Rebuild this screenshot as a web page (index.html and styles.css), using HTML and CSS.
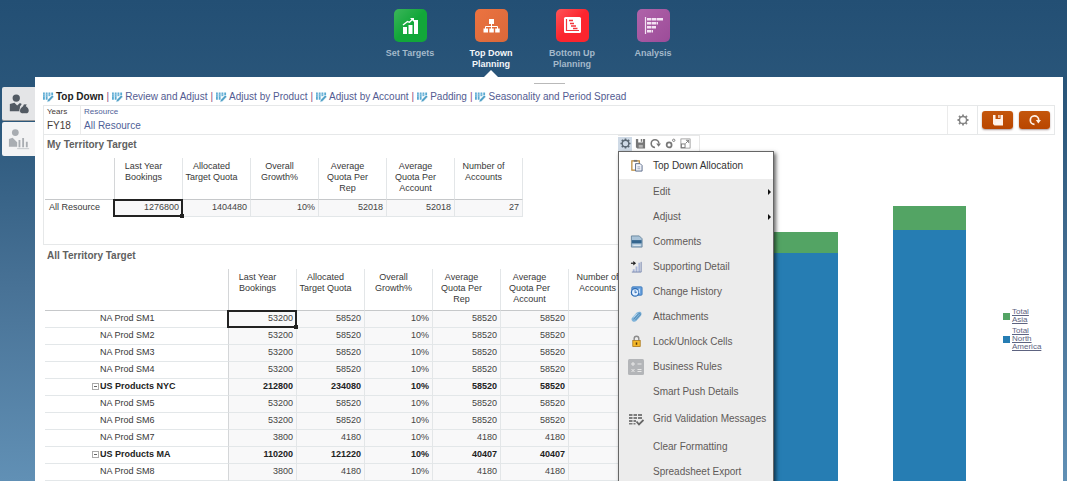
FILE: index.html
```html
<!DOCTYPE html>
<html lang="en">
<head>
<meta charset="utf-8">
<title>Top Down Planning</title>
<link rel="stylesheet" href="styles.css">
</head>
<body>
<svg class="defs" aria-hidden="true">
  <symbol id="form" viewBox="0 0 12 12">
    <path d="M0 1h2v8h-2zM3 1h2v8h-2zM6 1h2v4h-2zM9 1h2v3h-2z" fill="#58a9d2"/>
    <path d="M0 3h9M0 5h8" stroke="#b5daec" stroke-width=".6"/>
    <path d="M4.500 11.500l.8-2.600 4.700-4.900 1.700 1.700-4.700 5z" fill="#4a9cc4" stroke="#d9edf6" stroke-width=".5"/>
  </symbol>
  <symbol id="gear" viewBox="0 0 12 12">
    <circle cx="6" cy="6" r="3.600" fill="none" stroke="currentColor" stroke-width="1.500"/>
    <path d="M6 .5v2M6 9.500v2M.5 6h2M9.500 6h2M2 2l1.400 1.400M8.600 8.600l1.400 1.400M2 10l1.400-1.400M8.600 3.400l1.400-1.400" stroke="currentColor" stroke-width="1.800"/>
  </symbol>
  <symbol id="disk" viewBox="0 0 12 12">
    <path d="M1 1h2.500v4h5v-4h2.500v10.500h-8.500l-1.500-1.500z" fill="currentColor"/>
    <path d="M6.300 1h1.300v3h-1.300z" fill="currentColor"/>
    <path d="M4 7.500h4.500v3h-4.500z" fill="#fff" fill-opacity=".45"/>
  </symbol>
  <symbol id="redo" viewBox="0 0 12 12">
    <path d="M5.500 10.300a4.200 4.200 0 1 1 4.200-4.300" fill="none" stroke="currentColor" stroke-width="1.700"/>
    <path d="M6.800 6h5.200l-2.600 3.600z" fill="currentColor"/>
  </symbol>
</svg>

<div class="app">
  <nav class="topnav" aria-label="Planning steps">
    <a class="step" href="#">
      <svg class="tile green" viewBox="0 0 33 33"><path d="M9 18h4v7h-4zM14.500 16h4v9h-4zM20 11h4v14h-4z" fill="#fff"/><path d="M9 16l4.500-3.500 2 .8 3-3" fill="none" stroke="#fff" stroke-width="1.400"/><path d="M16 9h4v4z" fill="#fff"/></svg>
      <span>Set Targets</span>
    </a>
    <a class="step current" href="#">
      <svg class="tile orange" viewBox="0 0 33 33"><path d="M14 10h5v5h-5zM8.500 19.500h4.500v4h-4.500zM14.300 19.500h4.500v4h-4.500zM20.200 19.500h4.500v4h-4.500z" fill="#fff"/><path d="M16.500 15v5M10.500 20v-2.500h12v2.500" fill="none" stroke="#fff"/></svg>
      <span>Top Down Planning</span>
    </a>
    <a class="step" href="#">
      <svg class="tile red" viewBox="0 0 33 33"><rect x="8" y="8" width="17" height="16" rx="1.500" fill="#fff"/><path d="M10.500 10v11.500h12.500" fill="none" stroke="#f2363c" stroke-width="1.200"/><path d="M13 11.500h4M14 14.500h4M15 17h5M17 19.500h4.500" stroke="#f2363c" stroke-width="1.700"/></svg>
      <span>Bottom Up Planning</span>
    </a>
    <a class="step" href="#">
      <svg class="tile purple" viewBox="0 0 33 33"><path d="M8.500 8v17" stroke="#f3e3f3" stroke-width="1.200"/><path d="M10 10.200h16M10 14.200h11M10 18.200h9M10 22.300h6" stroke="#f3e3f3" stroke-width="2.400"/><path d="M14.500 8v17M19.500 8v17" stroke="#a2529d" stroke-width=".5"/></svg>
      <span>Analysis</span>
    </a>
  </nav>

  <div class="workspace">
    <div class="side">
      <button class="sidetab active" aria-label="Targets"><svg viewBox="0 0 24 24"><circle cx="9" cy="5.500" r="4" fill="#525a63"/><path d="M2 12l5-1.500 3 3 3-2.500 2 1-2 3v5h-11z" fill="#525a63"/><path d="M17 12h4l-1 2.500c4 2 4 8 0 8h-4c-5 0-4-6 0-8z" fill="#525a63" stroke="#eee" stroke-width=".8"/></svg></button>
      <button class="sidetab" aria-label="Analysis"><svg viewBox="0 0 24 24"><circle cx="8" cy="5" r="3.700" fill="#a9adb2"/><path d="M1 12l4-1.500 5 5v5h-9z" fill="#a9adb2"/><path d="M12.500 13v8M16.500 11v10M20.500 15v6" stroke="#a9adb2" stroke-width="2"/><path d="M10 22.500h13" stroke="#c3c6c9"/></svg></button>
    </div>

    <main class="sheet">
      <div class="handle"></div>
      <nav class="tabs" aria-label="Forms">
        <a class="tab selected" href="#"><svg><use href="#form"/></svg>Top Down</a><i>|</i>
        <a class="tab" href="#"><svg><use href="#form"/></svg>Review and Adjust</a><i>|</i>
        <a class="tab" href="#"><svg><use href="#form"/></svg>Adjust by Product</a><i>|</i>
        <a class="tab" href="#"><svg><use href="#form"/></svg>Adjust by Account</a><i>|</i>
        <a class="tab" href="#"><svg><use href="#form"/></svg>Padding</a><i>|</i>
        <a class="tab" href="#"><svg><use href="#form"/></svg>Seasonality and Period Spread</a>
      </nav>

      <div class="pov">
        <div class="dim"><small>Years</small><span>FY18</span></div>
        <a class="dim member" href="#"><small>Resource</small><span>All Resource</span></a>
        <button class="settings" aria-label="Settings"><svg><use href="#gear"/></svg></button>
        <div class="actions">
          <button aria-label="Save"><svg><use href="#disk"/></svg></button>
          <button aria-label="Refresh"><svg><use href="#redo"/></svg></button>
        </div>
      </div>

      <div class="board">
        <div class="grids">
          <section class="panel first">
            <h2>My Territory Target</h2>
            <table class="grid">
              <colgroup><col class="c-short"><col><col><col><col><col><col></colgroup>
              <thead><tr><td></td><th>Last Year Bookings</th><th>Allocated Target Quota</th><th>Overall Growth%</th><th>Average Quota Per Rep</th><th>Average Quota Per Account</th><th>Number of Accounts</th></tr></thead>
              <tbody><tr><th>All Resource</th><td class="picked">1276800</td><td>1404480</td><td>10%</td><td>52018</td><td>52018</td><td>27</td></tr></tbody>
            </table>
          </section>
          <section class="panel">
            <h2>All Territory Target</h2>
            <table class="grid tree">
              <colgroup><col class="c-long"><col><col><col><col><col><col></colgroup>
              <thead><tr><td></td><th>Last Year Bookings</th><th>Allocated Target Quota</th><th>Overall Growth%</th><th>Average Quota Per Rep</th><th>Average Quota Per Account</th><th>Number of Accounts</th></tr></thead>
              <tbody>
                <tr><th>NA Prod SM1</th><td class="picked">53200</td><td>58520</td><td>10%</td><td>58520</td><td>58520</td><td></td></tr>
                <tr><th>NA Prod SM2</th><td>53200</td><td>58520</td><td>10%</td><td>58520</td><td>58520</td><td></td></tr>
                <tr><th>NA Prod SM3</th><td>53200</td><td>58520</td><td>10%</td><td>58520</td><td>58520</td><td></td></tr>
                <tr><th>NA Prod SM4</th><td>53200</td><td>58520</td><td>10%</td><td>58520</td><td>58520</td><td></td></tr>
                <tr class="total"><th><button class="toggle" aria-label="Collapse"></button>US Products NYC</th><td>212800</td><td>234080</td><td>10%</td><td>58520</td><td>58520</td><td></td></tr>
                <tr><th>NA Prod SM5</th><td>53200</td><td>58520</td><td>10%</td><td>58520</td><td>58520</td><td></td></tr>
                <tr><th>NA Prod SM6</th><td>53200</td><td>58520</td><td>10%</td><td>58520</td><td>58520</td><td></td></tr>
                <tr><th>NA Prod SM7</th><td>3800</td><td>4180</td><td>10%</td><td>4180</td><td>4180</td><td></td></tr>
                <tr class="total"><th><button class="toggle" aria-label="Collapse"></button>US Products MA</th><td>110200</td><td>121220</td><td>10%</td><td>40407</td><td>40407</td><td></td></tr>
                <tr><th>NA Prod SM8</th><td>3800</td><td>4180</td><td>10%</td><td>4180</td><td>4180</td><td></td></tr>
              </tbody>
            </table>
          </section>
        </div>

        <section class="chart">
          <div class="tools">
            <button class="on" aria-label="Actions"><svg><use href="#gear"/></svg></button>
            <button aria-label="Save"><svg><use href="#disk"/></svg></button>
            <button aria-label="Refresh"><svg><use href="#redo"/></svg></button>
            <button aria-label="Options"><svg viewBox="0 0 12 12"><circle cx="4.500" cy="7.500" r="2.700" fill="none" stroke="currentColor" stroke-width="1.900"/><circle cx="9.500" cy="2.500" r="1.300" fill="none" stroke="currentColor"/></svg></button>
            <button aria-label="Maximize"><svg viewBox="0 0 12 12"><rect x="1" y="1" width="10" height="10" fill="none" stroke="currentColor" stroke-width=".7"/><rect x="1.500" y="6.500" width="4" height="4" fill="none" stroke="currentColor"/><path d="M6 6l3.500-3.500M6.500 2.500h3v3" fill="none" stroke="currentColor"/></svg></button>
          </div>
          <div class="plotrow">
            <div class="plot">
              <div class="bar" style="height:75.5%"><b style="height:8.4%"></b></div>
              <div class="bar" style="height:83.3%"><b style="height:8.7%"></b></div>
            </div>
            <div class="legend">
              <a href="#"><b class="asia"></b><span>Total Asia</span></a>
              <a href="#"><b></b><span>Total North America</span></a>
            </div>
          </div>
          <div class="menu" role="menu">
            <button class="hot" role="menuitem"><svg viewBox="0 0 14 14"><rect x="2" y="2" width="8" height="10" fill="#fff" stroke="#b88635" stroke-width="1.300"/><path d="M4 1h4v2h-4z" fill="#777"/><path d="M6 5h5l2 2v6h-7z" fill="#f4f6fb" stroke="#536584"/><path d="M8 8.500h3M8 10.500h3" stroke="#7c8ba6" stroke-width=".8"/></svg><span>Top Down Allocation</span></button>
            <button class="sub" role="menuitem"><span>Edit</span></button>
            <button class="sub" role="menuitem"><span>Adjust</span></button>
            <button role="menuitem"><svg viewBox="0 0 14 14"><path d="M1.500 1h8.500l3 3v9h-11.500z" fill="#a9c3d8" stroke="#69879f"/><path d="M2 5.500h10.500v3.500h-10.500z" fill="#34658e"/><path d="M3.500 11h8" stroke="#f3f7fa"/></svg><span>Comments</span></button>
            <button role="menuitem"><svg viewBox="0 0 14 14"><path d="M1 3.500h3" stroke="#222" stroke-width="1.300"/><path d="M3.500 1.200l3 2.300-3 2.300z" fill="#222"/><path d="M3 10h2v3h-2zM6 7h2v6h-2zM9 3h2v10h-2z" fill="#a9b6d8"/><path d="M12 2v11h-10" fill="none" stroke="#7786ad"/></svg><span>Supporting Detail</span></button>
            <button role="menuitem"><svg viewBox="0 0 14 14"><rect x="2" y="2" width="11" height="9" rx="1" fill="#6ca3df" stroke="#3d7abc"/><circle cx="5.500" cy="8" r="4" fill="#e3f0ff" stroke="#2c6bb4" stroke-width="1.300"/><path d="M5.500 5.500v3l2-1" fill="none" stroke="#2c6bb4"/><path d="M10 4v5" stroke="#e3f0ff"/></svg><span>Change History</span></button>
            <button role="menuitem"><svg viewBox="0 0 14 14"><path d="M2 8.500l5-5.500c4-3 7 0 4.500 3.500l-4.500 5c-3 2.500-6.500 0-5-3z" fill="#7eb2d8"/><path d="M4 10l5.500-6.200c2-.8 2 .8 1 2l-4.500 5" fill="none" stroke="#4f86b2"/><path d="M3.500 8l4-4" stroke="#d7eaf8"/></svg><span>Attachments</span></button>
            <button role="menuitem"><svg viewBox="0 0 14 14"><path d="M4.500 6v-2c0-3.500 5-3.500 5 0v2" fill="none" stroke="#8b8b8b" stroke-width="1.500"/><rect x="3" y="6" width="8" height="6.500" fill="#f5b829" stroke="#a77216" stroke-width=".8"/><path d="M7 8v2.500" stroke="#553807" stroke-width="1.600"/></svg><span>Lock/Unlock Cells</span></button>
            <button role="menuitem"><svg class="wide" viewBox="0 0 16 16"><rect width="16" height="16" rx="1.500" fill="#b3b5b8"/><path d="M3 5h4M5 3v4M9.500 5h4M3.500 10l3 3M6.500 10l-3 3M9.500 10.500h4M9.500 12.500h4" stroke="#e8e8e8"/></svg><span>Business Rules</span></button>
            <button role="menuitem"><span>Smart Push Details</span></button>
            <button class="tall" role="menuitem"><svg class="wide" viewBox="0 0 16 16"><path d="M1 3h3.500v2h-3.500zM5.500 3h3.500v2h-3.500zM10 3h4v2h-4zM1 6h3.500v2h-3.500zM5.500 6h3.500v2h-3.500zM10 6h4v2h-4zM1 9h3.500v2h-3.500zM5.500 9h2.500v2h-2.500zM1 12h3.500v1.500h-3.500zM5.500 12h2v1.500h-2z" fill="#7c7c7c"/><path d="M8.500 10.500l2.500 3 4.500-4.500" fill="none" stroke="#666" stroke-width="1.800"/></svg><span>Grid Validation Messages</span></button>
            <button role="menuitem"><span>Clear Formatting</span></button>
            <button role="menuitem"><span>Spreadsheet Export</span></button>
          </div>
        </section>
      </div>
    </main>
  </div>
</div>
</body>
</html>
```

FILE: styles.css
```css
* { box-sizing: border-box; }
body {
  margin: 0;
  background: #fff;
  font: 10px/12px "Liberation Sans", Arial, sans-serif;
  color: #333;
}
a { color: inherit; text-decoration: none; }
button {
  display: flex;
  align-items: center;
  justify-content: center;
  padding: 0;
  border: 0;
  background: none;
  font: inherit;
  color: inherit;
}
.defs { display: none; }

.app {
  display: flex;
  flex-direction: column;
  height: calc(100vh - 2px);
  margin-right: 1px;
  overflow: hidden;
  background: linear-gradient(#234f74, #2c587c 25%, #487296 60%, #6190b5);
}

/* Step navigation */
.topnav {
  display: flex;
  justify-content: center;
  height: 77px;
  padding: 9px 4px 0 0;
}
.step {
  position: relative;
  display: flex;
  flex-direction: column;
  align-items: center;
  gap: 6px;
  width: 81px;
  font-size: 9px;
  font-weight: bold;
  line-height: 11px;
  color: #a4b9ca;
  text-align: center;
}
.step span { padding: 0 16px; }
.step:first-child span { padding: 0; }
.step.current { color: #f2f6f9; }
.step.current::after {
  content: "";
  position: absolute;
  bottom: 0;
  border: 7px solid transparent;
  border-top: 0;
  border-bottom-color: #fff;
}
.tile { flex: none; width: 33px; height: 33px; border-radius: 5px; }
.green { background: linear-gradient(135deg, #3bb55a, #12a739 50%); }
.orange { background: linear-gradient(135deg, #ec7340, #d9683a); }
.red { background: linear-gradient(135deg, #ff5558, #fb252e 50%); }
.purple { background: linear-gradient(135deg, #b063a9, #9c4c99); }

/* Side tabs and sheet */
.workspace { display: flex; flex: 1; min-height: 0; padding-right: 4px; }
.side { display: flex; flex-direction: column; gap: 1px; flex: none; width: 35px; padding: 10px 0 0 2px; }
.sidetab { height: 34px; background: #f3f3f4; border-radius: 2px 0 0 2px; }
.sidetab.active { background: #e4e5e7; border-bottom: 1px solid #999; }
.sidetab svg { width: 22px; height: 24px; }
.sheet {
  display: flex;
  flex-direction: column;
  flex: 1;
  min-width: 0;
  padding: 6px 8px 0;
  background: #fff;
}
.handle { flex: none; width: 31px; height: 1px; margin: 0 auto; background: #b9b9b9; }

.tabs { display: flex; align-items: center; gap: 3px; height: 21px; padding: 5px 0 0; white-space: nowrap; }
.tab { display: flex; align-items: center; gap: 2px; color: #535b91; }
.tab svg { width: 11px; height: 12px; }
.tab.selected { font-weight: bold; color: #222; }
.tabs i { font-style: normal; color: #8e4a7d; }

.pov { display: flex; flex: none; height: 30px; border: 1px solid #e6e8e9; }
.dim { display: flex; flex-direction: column; padding: 0 3px; gap: 2px; border-right: 1px solid #ebebeb; width: 37px; color: #443a36; }
.dim small { font-size: 8px; line-height: 12px; }
.dim.member { flex: 1; color: #4f5f98; }
.settings { width: 30px; border-right: 1px solid #e6e8e9; color: #858585; }
.settings svg { width: 12px; height: 12px; }
.actions { display: flex; align-items: center; gap: 6px; padding: 0 4px; }
.actions button { width: 31px; height: 18px; border-radius: 3px; background: linear-gradient(#c4560c, #b94600); box-shadow: 0 1px 2px #a99; color: #fff1e8; }
.actions svg { width: 12px; height: 12px; }

/* Data grids */
.board { display: flex; flex: 1; min-height: 0; }
.grids { flex: none; width: 575px; overflow: hidden; }
.panel { padding: 4px 0 0 2px; white-space: nowrap; }
.panel.first { height: 110px; border: 1px solid #e6e8e9; border-width: 0 0 1px 1px; padding: 3px 0 0 1px; }
.panel h2 { margin: 0; padding: 0 2px; font-size: 10px; line-height: 14px; color: #606060; }
.grid { border-collapse: separate; border-spacing: 0; table-layout: fixed; width: 478px; margin-top: 6px; font-size: 9px; line-height: 11px; }
.grid.tree { width: 592px; }
.grid col { width: 68px; }
.grid .c-short { width: 70px; }
.grid .c-long { width: 184px; }
.grid td, .grid th { padding: 0 3px 2px 2px; height: 17px; border-right: 1px solid #e3e6e8; }
.grid thead th, .grid thead td { height: 42px; border-bottom: 1px solid #c6c8ca; }
.grid thead th { padding: 3px 12px 0 2px; font-weight: normal; vertical-align: top; white-space: normal; color: #383838; }
.grid tbody td { text-align: right; background: #f8f8f9; border-bottom: 1px solid #e3e7e9; color: #444; }
.grid tbody th { padding-left: 4px; text-align: left; font-weight: normal; color: #383838; border-bottom: 1px solid #e3e7e9; }
.first .grid tbody th { border-bottom-color: transparent; }
.grid th:first-child, .grid td:first-child { border-right-color: #d4d6d8; }
.grid.tree tbody th { padding-left: 55px; }
.grid.tree .total th { padding-left: 47px; }
.grid .total th, .grid .total td { font-weight: bold; color: #222; }
.grid td.picked { position: relative; }
.picked::before { content: ""; position: absolute; inset: -1px -1px -1px -2px; border: 2px solid #222; }
.picked::after { content: ""; position: absolute; right: -2px; bottom: -2px; width: 4px; height: 4px; background: #222; }
.toggle { display: inline-flex; width: 7px; height: 7px; margin-right: 1px; border: 1px solid #aaa; background: linear-gradient(#666, #666) center / 3px 1px no-repeat; }

/* Chart */
.chart { position: relative; display: flex; flex-direction: column; flex: 1; min-width: 0; }
.tools { display: flex; align-items: center; gap: 1px; width: 82px; height: 16px; border: 1px solid #e8e8e8; border-width: 1px 1px 0 0; color: #777; }
.tools button { width: 14px; height: 14px; }
.tools .on { background: #cfdae6; color: #5d6974; }
.tools svg { width: 11px; height: 11px; }
.plotrow { display: flex; flex: 1; min-height: 0; }
.plot { display: flex; justify-content: flex-end; align-items: flex-end; gap: 55px; flex: 1; }
.bar { width: 73px; background: #267db3; }
.bar b { display: block; background: #53a464; }
.legend { display: flex; flex-direction: column; gap: 3px; width: 89px; padding: 157px 8px 0 37px; font-size: 8px; line-height: 8px; color: #5d6380; }
.legend a { display: flex; align-items: center; gap: 2px; }
.legend b { flex: none; width: 7px; height: 7px; background: #267db3; }
.legend .asia { background: #53a464; }
.legend span { width: 24px; text-decoration: underline; }

/* Actions menu */
.menu {
  position: absolute;
  top: 16px;
  left: 0;
  width: 156px;
  border: 1px solid #666;
  background: #ececec;
  box-shadow: 2px 2px 4px rgba(0, 0, 0, .6);
}
.menu button {
  position: relative;
  display: grid;
  grid-template-columns: 34px 1fr;
  justify-items: start;
  width: 100%;
  height: 25px;
  text-align: left;
  color: #5f5a58;
}
.menu button.hot { height: 27px; background: #fff; color: #333; }
.menu button.tall { height: 30px; }
.menu svg { justify-self: center; width: 13px; height: 13px; }
.menu svg.wide { width: 16px; height: 16px; }
.menu span { grid-column: 2; }
.sub::after { content: ""; position: absolute; right: 2px; border: 3px solid transparent; border-left-color: #111; border-right: 0; }
```
